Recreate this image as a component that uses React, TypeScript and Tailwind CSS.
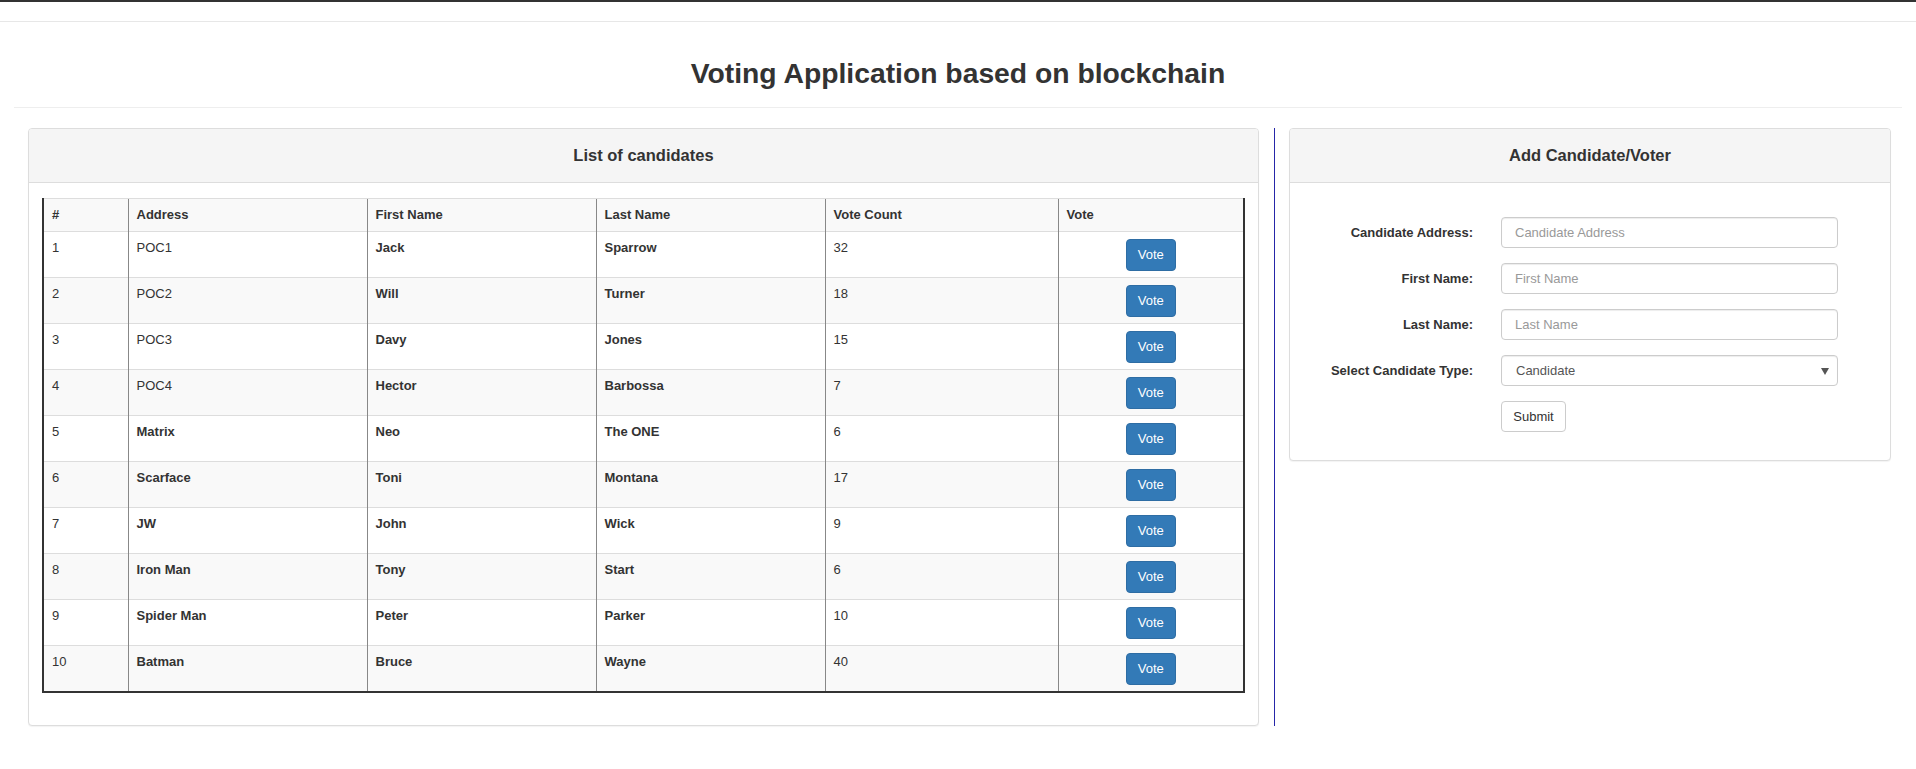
import React from "react";

type Row = {
  id: number;
  addr: string;
  first: string;
  last: string;
  count: number;
  addrBold: boolean;
};

const rows: Row[] = [
  { id: 1, addr: "POC1", first: "Jack", last: "Sparrow", count: 32, addrBold: false },
  { id: 2, addr: "POC2", first: "Will", last: "Turner", count: 18, addrBold: false },
  { id: 3, addr: "POC3", first: "Davy", last: "Jones", count: 15, addrBold: false },
  { id: 4, addr: "POC4", first: "Hector", last: "Barbossa", count: 7, addrBold: false },
  { id: 5, addr: "Matrix", first: "Neo", last: "The ONE", count: 6, addrBold: true },
  { id: 6, addr: "Scarface", first: "Toni", last: "Montana", count: 17, addrBold: true },
  { id: 7, addr: "JW", first: "John", last: "Wick", count: 9, addrBold: true },
  { id: 8, addr: "Iron Man", first: "Tony", last: "Start", count: 6, addrBold: true },
  { id: 9, addr: "Spider Man", first: "Peter", last: "Parker", count: 10, addrBold: true },
  { id: 10, addr: "Batman", first: "Bruce", last: "Wayne", count: 40, addrBold: true },
];

const font = { fontFamily: '"Liberation Sans", Arial, sans-serif' };

function FormRow({ label, children }: { label: string; children: React.ReactNode }) {
  return (
    <div className="flex items-center mb-[15px]">
      <label className="w-[183px] text-right text-[13px] font-bold text-[#333]">{label}</label>
      <div className="ml-[28px] w-[337px]">{children}</div>
    </div>
  );
}

export default function App() {
  return (
    <div className="min-h-[769px] bg-white text-[#333]" style={font}>
      <div className="h-[2px] bg-[#333]" />
      <div className="h-[20px] border-b border-[#e7e7e7]" />
      <div className="mx-[14px] h-[86px] border-b border-[#eee] pt-[36px]">
        <h2 className="text-center text-[28.3px] leading-[31px] font-bold text-[#333]">
          Voting Application based on blockchain
        </h2>
      </div>

      <div className="flex items-stretch mt-[20px] pl-[28px]">
        <div className="w-[1231px] border border-[#ddd] rounded-[4px] bg-white shadow-[0_1px_1px_rgba(0,0,0,0.05)]">
          <div className="h-[54px] bg-[#f5f5f5] border-b border-[#ddd] rounded-t-[3px] flex items-center justify-center">
            <span className="text-[16.5px] font-bold text-[#333]">List of candidates</span>
          </div>
          <div className="pt-[15px] pl-[13px] pr-[15px] pb-[32px]">
            <table className="w-[1201px] table-fixed border-collapse border-l-[2px] border-r-[2px] border-b-[2px] border-[#333] text-[13px]">
              <colgroup>
                <col className="w-[85px]" />
                <col className="w-[239px]" />
                <col className="w-[229px]" />
                <col className="w-[229px]" />
                <col className="w-[233px]" />
                <col className="w-[186px]" />
              </colgroup>
              <tbody>
                <tr className="bg-[#f9f9f9] h-[33px]">
                  <th className="text-left font-bold px-[8px] border-t border-[#ddd]">#</th>
                  <th className="text-left font-bold px-[8px] border-t border-t-[#ddd] border-l border-l-[#888]">Address</th>
                  <th className="text-left font-bold px-[8px] border-t border-t-[#ddd] border-l border-l-[#888]">First Name</th>
                  <th className="text-left font-bold px-[8px] border-t border-t-[#ddd] border-l border-l-[#888]">Last Name</th>
                  <th className="text-left font-bold px-[8px] border-t border-t-[#ddd] border-l border-l-[#888]">Vote Count</th>
                  <th className="text-left font-bold px-[8px] border-t border-t-[#ddd] border-l border-l-[#888]">Vote</th>
                </tr>
                {rows.map((r, i) => (
                  <tr key={r.id} className={`h-[46px] ${i % 2 === 1 ? "bg-[#f9f9f9]" : "bg-white"}`}>
                    <td className="align-top px-[8px] pt-[7px] border-t border-[#ddd] leading-[18px]">{r.id}</td>
                    <td className={`align-top px-[8px] pt-[7px] border-t border-t-[#ddd] border-l border-l-[#888] leading-[18px] ${r.addrBold ? "font-bold" : ""}`}>
                      {r.addr}
                    </td>
                    <td className="align-top px-[8px] pt-[7px] border-t border-t-[#ddd] border-l border-l-[#888] leading-[18px] font-bold">
                      {r.first}
                    </td>
                    <td className="align-top px-[8px] pt-[7px] border-t border-t-[#ddd] border-l border-l-[#888] leading-[18px] font-bold">
                      {r.last}
                    </td>
                    <td className="align-top px-[8px] pt-[7px] border-t border-t-[#ddd] border-l border-l-[#888] leading-[18px]">
                      {r.count}
                    </td>
                    <td className="align-top px-[8px] pt-[7px] pb-[6px] border-t border-t-[#ddd] border-l border-l-[#888] text-center">
                      <button className="h-[32px] w-[50px] bg-[#337ab7] border border-[#2e6da4] rounded-[4px] text-white text-[13px]">
                        Vote
                      </button>
                    </td>
                  </tr>
                ))}
              </tbody>
            </table>
          </div>
        </div>

        <div className="ml-[15px] border-l border-[#2626a8] pl-[14px]">
          <div className="w-[602px] border border-[#ddd] rounded-[4px] bg-white shadow-[0_1px_1px_rgba(0,0,0,0.05)]">
            <div className="h-[54px] bg-[#f5f5f5] border-b border-[#ddd] rounded-t-[3px] flex items-center justify-center">
              <span className="text-[16.5px] font-bold text-[#333]">Add Candidate/Voter</span>
            </div>
            <div className="pt-[34px] pb-[13px]">
              <FormRow label="Candidate Address:">
                <input
                  placeholder="Candidate Address"
                  className="w-full h-[31px] border border-[#ccc] rounded-[4px] px-[13px] text-[13px] text-[#555] placeholder:text-[#999] shadow-[inset_0_1px_1px_rgba(0,0,0,0.075)] outline-none"
                  style={font}
                />
              </FormRow>
              <FormRow label="First Name:">
                <input
                  placeholder="First Name"
                  className="w-full h-[31px] border border-[#ccc] rounded-[4px] px-[13px] text-[13px] text-[#555] placeholder:text-[#999] shadow-[inset_0_1px_1px_rgba(0,0,0,0.075)] outline-none"
                  style={font}
                />
              </FormRow>
              <FormRow label="Last Name:">
                <input
                  placeholder="Last Name"
                  className="w-full h-[31px] border border-[#ccc] rounded-[4px] px-[13px] text-[13px] text-[#555] placeholder:text-[#999] shadow-[inset_0_1px_1px_rgba(0,0,0,0.075)] outline-none"
                  style={font}
                />
              </FormRow>
              <FormRow label="Select Candidate Type:">
                <div className="relative">
                  <select
                    defaultValue="Candidate"
                    className="appearance-none w-full h-[31px] border border-[#ccc] rounded-[4px] pl-[14px] pr-[24px] text-[13px] text-[#555] bg-white shadow-[inset_0_1px_1px_rgba(0,0,0,0.075)] outline-none"
                    style={font}
                  >
                    <option>Candidate</option>
                    <option>Voter</option>
                  </select>
                  <svg
                    className="absolute right-[9px] top-[12px] pointer-events-none"
                    width="8"
                    height="8"
                    viewBox="0 0 8 8"
                  >
                    <path d="M0 1 L8 1 L4 8 Z" fill="#555" />
                  </svg>
                </div>
              </FormRow>
              <FormRow label="">
                <button className="h-[31px] w-[65px] border border-[#ccc] rounded-[4px] bg-white text-[13px] text-[#333]">
                  Submit
                </button>
              </FormRow>
            </div>
          </div>
        </div>
      </div>
    </div>
  );
}
